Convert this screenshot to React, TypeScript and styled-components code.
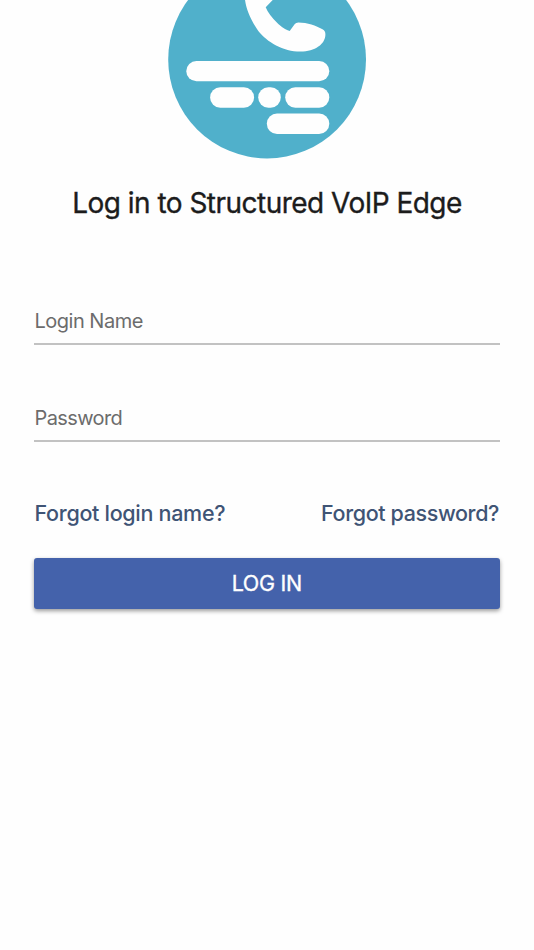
import React from 'react';
import styled, { createGlobalStyle } from 'styled-components';

const GlobalStyle = createGlobalStyle`
  * { box-sizing: border-box; }
  body { margin: 0; background: #fefefe; font-family: Inter, "Liberation Sans", sans-serif; }
`;

const Page = styled.main`
  height: 950px;
  overflow: hidden;
  background: #fefefe;
`;

const Logo = styled.svg`
  display: block;
  width: 100%;
  height: 160px;
`;

const Title = styled.h1`
  margin: 23px 0 0;
  height: 40px;
  line-height: 40px;
  text-align: center;
  font-size: 28px;
  font-weight: 400;
  letter-spacing: -0.52px;
  white-space: nowrap;
  color: #1c1c1c;
  -webkit-text-stroke: 0.35px #1c1c1c;
`;

const Form = styled.form`
  display: flex;
  flex-direction: column;
  padding: 78px 34.5px 0 34px;
`;

const Field = styled.input`
  height: 44px;
  margin-bottom: 53px;
  padding: 0 0 3px 0.5px;
  border: 0;
  border-bottom: 2px solid #c2c2c2;
  border-radius: 0;
  outline: 0;
  background: transparent;
  font: 400 20px Inter, sans-serif;
  letter-spacing: -0.5px;
  color: #212121;
  &::placeholder { color: #6c6c6c; opacity: 1; }
  &[type='password'] { letter-spacing: -0.6px; }
`;

const Links = styled.nav`
  display: flex;
  justify-content: space-between;
  height: 30px;
  margin-top: 3px;
  padding: 0 0.5px;
`;

const TextLink = styled.a<{ $spacing: string }>`
  line-height: 30px;
  font-size: 21.5px;
  font-weight: 500;
  letter-spacing: ${(p) => p.$spacing};
  white-space: nowrap;
  color: #3f5475;
  text-decoration: none;
`;

const LoginButton = styled.button`
  height: 51px;
  margin-top: 30px;
  padding: 0 0 1px;
  border: 0;
  border-radius: 3px;
  background: #4462ab;
  box-shadow: 0 2px 4px rgba(0, 0, 0, 0.4);
  font: 400 21.5px Inter, sans-serif;
  letter-spacing: -0.3px;
  color: #fefefe;
  -webkit-text-stroke: 0.35px #fefefe;
`;

export default function App() {
  return (
    <Page>
      <GlobalStyle />
      <Logo viewBox="0 0 534 160" aria-label="Structured VoIP Edge">
        <circle cx="267.1" cy="59.5" r="98.9" fill="#50b0cb" />
        <g fill="#fefefe">
          <path d="M244.5 -6C245 6 248.5 16.5 258.3 31C267 42 283 51.6 300.5 51.6C315 51.6 325.4 44 325.4 34.5C325.4 32 324.8 30.8 322.5 29.3C316 25.5 307.5 22.6 298.3 22.5Q296 22.5 294.8 24L289.7 31Q284.5 29.5 278.3 24Q268.5 14.5 265.7 7.2L272.7 0L274 -6Z" />
          <rect x="186.3" y="61" width="143" height="20.3" rx="10.1" />
          <rect x="210.1" y="87.2" width="44" height="20.5" rx="10.2" />
          <rect x="258.2" y="87.2" width="22.6" height="20.5" rx="10.2" />
          <rect x="285.2" y="87.2" width="44.1" height="20.5" rx="10.2" />
          <rect x="266.8" y="113.4" width="62.5" height="20.5" rx="10.2" />
        </g>
      </Logo>
      <Title>Log in to Structured VoIP Edge</Title>
      <Form onSubmit={(e) => e.preventDefault()}>
        <Field placeholder="Login Name" aria-label="Login Name" />
        <Field type="password" placeholder="Password" aria-label="Password" />
        <Links>
          <TextLink href="#" $spacing="-0.3px">Forgot login name?</TextLink>
          <TextLink href="#" $spacing="-0.38px">Forgot password?</TextLink>
        </Links>
        <LoginButton>LOG IN</LoginButton>
      </Form>
    </Page>
  );
}
